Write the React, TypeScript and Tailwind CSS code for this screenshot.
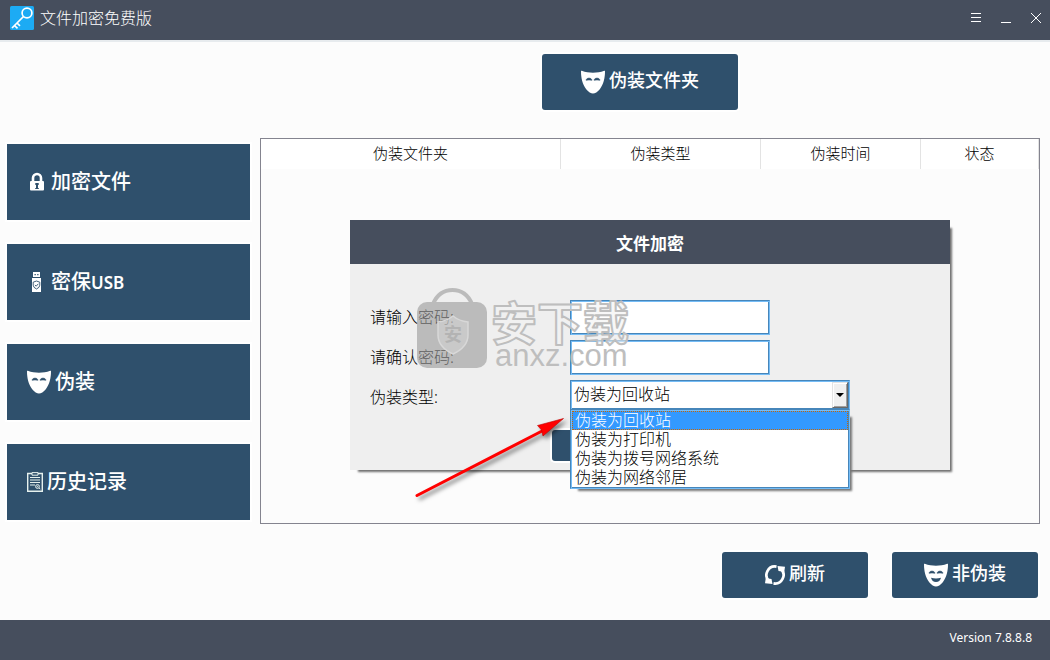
import type { ReactNode } from "react";
import clsx from "clsx";

const COLUMNS = [
  { label: "伪装文件夹", width: "w-[300px]" },
  { label: "伪装类型", width: "w-[200px]" },
  { label: "伪装时间", width: "w-[160px]" },
  { label: "状态", width: "" },
];

const TYPES = [
  "伪装为回收站",
  "伪装为打印机",
  "伪装为拨号网络系统",
  "伪装为网络邻居",
];

const FIELD =
  "border border-t-[#4686ba] border-l-[#4686ba] border-r-[#74bcf6] border-b-[#74bcf6] bg-white shadow-[inset_1px_1px_#74bcf6,inset_-1px_-1px_#4686ba] outline-none";

function KeyLogo() {
  return (
    <svg width="24" height="24" viewBox="0 0 24 24" fill="none" aria-hidden="true">
      <rect width="24" height="24" rx="1.5" fill="#1cabf4" />
      <g stroke="#fff" strokeWidth="1.7">
        <circle cx="17" cy="7" r="4.9" />
        <path d="M13.5 10.5 2 22M4.5 19.5l3 2.8M7 17l3 2.8" />
      </g>
    </svg>
  );
}

function MaskIcon({ smile = false }: { smile?: boolean }) {
  return (
    <svg width="24" height="24" viewBox="0 0 24 24" fill="none" aria-hidden="true">
      <path
        d="M.8.8C4.5 2.2 8 2.7 12 2.7S19.500 2.200 23.200.8C23.900.5 24 .9 24 1.600 24 8 22.500 14.500 18.800 19.300 16.600 22.100 14 23.500 12 23.500S7.400 22.100 5.200 19.300C1.500 14.500 0 8 0 1.600 0 .9.1.5.8.8Z"
        fill="#fff"
      />
      <path
        d="M5 10.300C5.500 7.300 10.500 7.300 11 10.300Q8 9.700 5 10.300ZM13 10.300C13.500 7.300 18.500 7.300 19 10.300Q16 9.700 13 10.300Z"
        fill="#2f506c"
        stroke="#2f506c"
        strokeWidth=".5"
      />
      {smile && <path d="M7 14.800Q12 16 17 14.800Q16 19 12 19T7 14.800Z" fill="#2f506c" />}
    </svg>
  );
}

function LockIcon() {
  return (
    <svg width="20" height="20" viewBox="0 0 20 20" fill="none" aria-hidden="true">
      <path d="M6 10V6a4 4 0 0 1 8 0V10" stroke="#fff" strokeWidth="2.600" />
      <rect x="3" y="9" width="14" height="9.500" rx="1" fill="#fff" />
      <path d="M8.300 11h3.400v2H11v3h.8v1H8.200v-1H9v-3h-.7z" fill="#2f506c" />
    </svg>
  );
}

function UsbIcon() {
  return (
    <svg width="20" height="20" viewBox="0 0 20 20" fill="none" aria-hidden="true">
      <path d="M6 0h7v5H6zM5 6h9v14H5z" fill="#fff" />
      <path d="M7.500 2h1.300v1.300H7.500zM10.200 2h1.300v1.300h-1.300z" fill="#2f506c" />
      <path
        d="M9.500 9 12.800 10.200v3q0 2.300-3.300 3.800-3.300-1.500-3.300-3.800v-3zM7.900 12.900l1.300 1.300 2.100-2.400"
        stroke="#2f506c"
        strokeWidth=".9"
      />
    </svg>
  );
}

function ClipboardIcon() {
  return (
    <svg width="16" height="20" viewBox="0 0 16 20" fill="none" stroke="#e6f1ee" aria-hidden="true">
      <path d="M5 1.500H.7v17.800h14.600V1.500H11" strokeWidth="1.400" />
      <path d="M5 .6h6v2.600H5z" />
      <path d="M3 5.500h10M3 8h10M3 10.500h10M3 13h5" strokeWidth="1.100" />
      <circle cx="10.500" cy="14.500" r="1.900" />
      <circle cx="10.500" cy="14.500" r=".4" />
      <path d="M12 16l1.300 1" />
    </svg>
  );
}

function RefreshIcon() {
  return (
    <svg width="20" height="20" viewBox="0 0 20 20" fill="none" aria-hidden="true">
      <path
        d="M4 16A8.500 8.500 0 0 1 11.500 1.600M16 4A8.500 8.500 0 0 1 8.500 18.400"
        stroke="#fff"
        strokeWidth="2.700"
      />
      <path d="M12.500 1 20 1.800 19 8.500 16.800 6.600 13.500 6ZM7.500 19 0 18.200 1 11.500 3.200 13.400 6.500 14Z" fill="#fff" />
    </svg>
  );
}

function SideButton({ icon, children }: { icon: ReactNode; children: ReactNode }) {
  return (
    <button
      type="button"
      className="flex h-[76px] items-center gap-1 bg-[#2f506c] px-5 text-xl font-medium text-white shadow-[0_0_0_2px_#fff]"
    >
      {icon}
      <span>{children}</span>
    </button>
  );
}

function ActionButton({
  icon,
  className,
  children,
}: {
  icon?: ReactNode;
  className?: string;
  children: ReactNode;
}) {
  return (
    <button
      type="button"
      className={clsx(
        "flex items-center justify-center gap-1 rounded-[3px] bg-[#2f506c] text-lg font-medium text-white shadow-[0_0_0_2px_#fff]",
        className,
      )}
    >
      {icon}
      <span className="pb-1">{children}</span>
    </button>
  );
}

function TitleBar() {
  return (
    <header className="flex h-[42px] items-center justify-between border-b-2 border-[#e7ebee] bg-[#464e5d] pr-[9px] pb-1 pl-[10px] text-white">
      <div className="flex items-center gap-1.5">
        <KeyLogo />
        <h1 className="text-base font-light">文件加密免费版</h1>
      </div>
      <div className="flex gap-5">
        <button type="button" aria-label="菜单">
          <svg width="10" height="10" stroke="#fff">
            <path d="M0 .5h10M0 4.500h10M0 8.500h10" />
          </svg>
        </button>
        <button type="button" aria-label="最小化">
          <svg width="10" height="10" stroke="#fff">
            <path d="M0 9.500h10" />
          </svg>
        </button>
        <button type="button" aria-label="关闭">
          <svg width="10" height="10" stroke="#fff">
            <path d="M0 0l10 10M10 0L0 10" />
          </svg>
        </button>
      </div>
    </header>
  );
}

function Watermark() {
  return (
    <svg
      className="pointer-events-none absolute top-[66px] left-[65px]"
      width="220"
      height="86"
      viewBox="0 0 220 86"
      fill="none"
      aria-hidden="true"
    >
      <g opacity=".6">
        <path d="M18 18Q24 4 37.500 4T57 18" stroke="#9a9a9a" strokeWidth="4" />
        <rect x="2" y="16" width="70" height="66" rx="10" fill="#9a9a9a" />
      </g>
      <path
        d="M38 30q6 5 15 6v13q0 12-15 19-15-7-15-19V36q9-1 15-6Z"
        fill="#d8d8d8"
        fillOpacity=".5"
        stroke="#d8d8d8"
        strokeWidth="1.500"
      />
      <text x="29" y="55" fontSize="18" fontWeight="700" fill="#b3b3b3">
        安
      </text>
      <text
        x="76"
        y="54"
        fontSize="46"
        fontWeight="700"
        fill="#f3f3f3"
        fillOpacity=".6"
        stroke="#bebebe"
        strokeWidth="2"
        strokeLinejoin="round"
      >
        安下载
      </text>
      <text x="80" y="80" fontSize="31" fill="#bebebe" className="font-['Liberation_Sans',sans-serif]">
        anxz.com
      </text>
    </svg>
  );
}

function Arrow() {
  return (
    <svg
      className="pointer-events-none absolute top-[190px] left-[60px] drop-shadow-[3px_3px_2px_rgba(0,0,0,0.5)]"
      width="160"
      height="95"
      viewBox="0 0 160 95"
      aria-hidden="true"
    >
      <path d="M7 85.500 134 20" stroke="#f00" strokeWidth="3" strokeLinecap="round" />
      <path d="M153.500 8.500 127.500 15.500 131.500 20 133 26Z" fill="#f00" stroke="#b00" strokeWidth=".6" />
    </svg>
  );
}

function TypeSelect() {
  return (
    <div className="relative w-[280px]">
      <select id="type" defaultValue={TYPES[0]} className={clsx(FIELD, "block h-[30px] w-full appearance-none pb-0.5 pl-[3px]")}>
        {TYPES.map((type) => (
          <option key={type}>{type}</option>
        ))}
      </select>
      <span className="pointer-events-none absolute top-0.5 right-0.5 flex h-[26px] w-4 items-center justify-center border border-t-[#e3e3e3] border-r-[#696969] border-b-[#696969] border-l-[#e3e3e3] bg-[#f0f0f0] shadow-[inset_1px_1px_#fff,inset_-1px_-1px_#a0a0a0]">
        <svg width="8" height="4">
          <path d="M0 0h8L4 4z" />
        </svg>
      </span>
      <ul
        role="listbox"
        aria-label="伪装类型"
        className="absolute top-[29px] z-10 w-full border border-t-[#4686ba] border-l-[#4686ba] border-r-[#74bcf6] border-b-[#74bcf6] bg-white p-px leading-[19px] shadow-[inset_1px_1px_#74bcf6,inset_-1px_-1px_#4686ba,5px_5px_2px_-3px_#777]"
      >
        {TYPES.map((type, i) => (
          <li
            key={type}
            role="option"
            aria-selected={i === 0}
            className={clsx(
              "pl-[3px]",
              i === 0 && "bg-[#3399ff] text-white outline outline-dotted outline-[#cc6600] -outline-offset-1",
            )}
          >
            {type}
          </li>
        ))}
      </ul>
    </div>
  );
}

function EncryptDialog() {
  return (
    <div
      role="dialog"
      aria-labelledby="dialog-title"
      className="absolute top-[81px] left-1/2 w-[600px] -translate-x-1/2 shadow-[5px_5px_2px_-3px_#707070]"
    >
      <h2
        id="dialog-title"
        className="flex h-11 items-center justify-center bg-[#464e5d] pt-1 text-[17px] font-bold text-white"
      >
        文件加密
      </h2>
      <form className="relative bg-[#efefef] px-5 pt-9 pb-[9px] text-base font-light">
        <div className="grid grid-cols-[200px_1fr] gap-y-[5px]">
          <label htmlFor="password" className="leading-[35px]">
            请输入密码:
          </label>
          <input id="password" type="password" className={clsx(FIELD, "h-[35px] w-[200px] px-1")} />
          <label htmlFor="confirm" className="leading-[35px]">
            请确认密码:
          </label>
          <input id="confirm" type="password" className={clsx(FIELD, "h-[35px] w-[200px] px-1")} />
          <label htmlFor="type" className="leading-[35px]">
            伪装类型:
          </label>
          <TypeSelect />
        </div>
        <button
          type="button"
          aria-label="确定"
          className="mx-auto mt-[15px] block h-[31px] w-[196px] rounded-[3px] bg-[#2f506c] shadow-[0_0_0_2px_#fff]"
        />
        <div className="absolute -top-11 left-0">
          <Watermark />
          <Arrow />
        </div>
      </form>
    </div>
  );
}

export default function App() {
  return (
    <div className="flex min-h-screen flex-col bg-[#fcfcfc] font-['Noto_Sans','Noto_Sans_CJK_SC',sans-serif] text-black">
      <TitleBar />

      <main className="flex flex-1 gap-[10px] pt-3 pr-[10px] pb-[22px] pl-[7px]">
        <nav className="flex w-[243px] shrink-0 flex-col gap-6 pt-[90px]">
          <SideButton icon={<LockIcon />}>加密文件</SideButton>
          <SideButton icon={<UsbIcon />}>
            密保<span className="text-[17px] font-semibold">USB</span>
          </SideButton>
          <SideButton icon={<MaskIcon />}>伪装</SideButton>
          <SideButton icon={<ClipboardIcon />}>历史记录</SideButton>
        </nav>

        <div className="flex flex-1 flex-col gap-7">
          <div className="flex justify-center pr-5">
            <ActionButton icon={<MaskIcon />} className="h-14 w-[196px]">
              伪装文件夹
            </ActionButton>
          </div>

          <section className="relative min-h-[386px] flex-1 border border-[#84848f]">
            <table className="w-full table-fixed border-separate border-spacing-0 bg-white text-[15px]">
              <thead>
                <tr className="h-[30px]">
                  {COLUMNS.map(({ label, width }) => (
                    <th
                      key={label}
                      scope="col"
                      className={clsx("border-r border-[#e3e3e3] p-0 pb-0.5 font-light", width)}
                    >
                      {label}
                    </th>
                  ))}
                </tr>
              </thead>
            </table>
            <EncryptDialog />
          </section>

          <div className="flex justify-end gap-6 pr-0.5">
            <ActionButton icon={<RefreshIcon />} className="h-[46px] w-[146px]">
              刷新
            </ActionButton>
            <ActionButton icon={<MaskIcon smile />} className="h-[46px] w-[146px]">
              非伪装
            </ActionButton>
          </div>
        </div>
      </main>

      <footer className="flex h-10 items-center justify-end bg-[#464e5d] px-[18px] pb-1 text-xs text-white">
        Version 7.8.8.8
      </footer>
    </div>
  );
}
